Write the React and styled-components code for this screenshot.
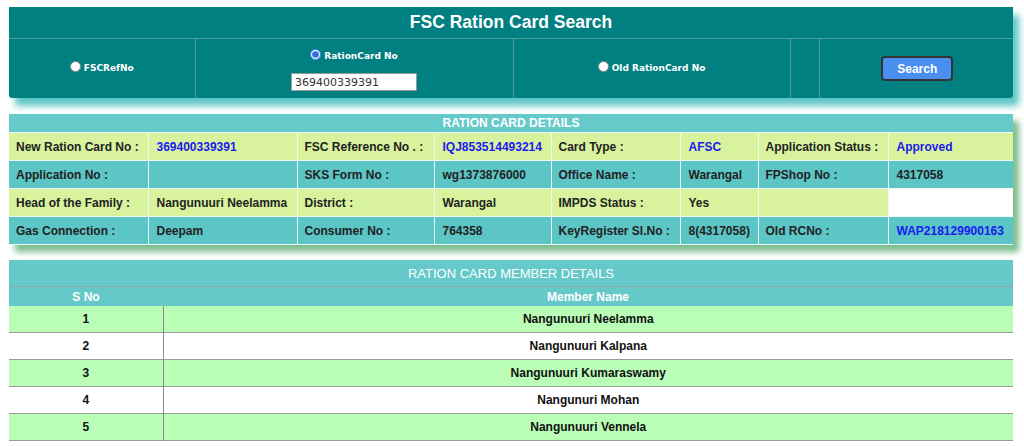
import React from 'react';
import styled, { createGlobalStyle } from 'styled-components';

const GlobalStyle = createGlobalStyle`
  body {
    margin: 0;
    background: #fff;
    font-family: "Liberation Sans", Arial, sans-serif;
  }
`;

const details = [
  {
    tone: 'green',
    cells: [
      ['New Ration Card No :', '369400339391', true],
      ['FSC Reference No . :', 'IQJ853514493214', true],
      ['Card Type :', 'AFSC', true],
      ['Application Status :', 'Approved', true],
    ],
  },
  {
    tone: 'teal',
    cells: [
      ['Application No :', '', false],
      ['SKS Form No :', 'wg1373876000', false],
      ['Office Name :', 'Warangal', false],
      ['FPShop No :', '4317058', false],
    ],
  },
  {
    tone: 'green',
    cells: [
      ['Head of the Family :', 'Nangunuuri Neelamma', false],
      ['District :', 'Warangal', false],
      ['IMPDS Status :', 'Yes', false],
      ['', null, false],
    ],
  },
  {
    tone: 'teal',
    cells: [
      ['Gas Connection :', 'Deepam', false],
      ['Consumer No :', '764358', false],
      ['KeyRegister Sl.No :', '8(4317058)', false],
      ['Old RCNo :', 'WAP218129900163', true],
    ],
  },
];

const members = [
  'Nangunuuri Neelamma',
  'Nangunuuri Kalpana',
  'Nangunuuri Kumaraswamy',
  'Nangunuri Mohan',
  'Nangunuuri Vennela',
];

const App = () => {
  return (
    <>
      <GlobalStyle />
      <Page>
        <SearchPanel>
          <colgroup>
            <col style={{ width: 186 }} />
            <col style={{ width: 318 }} />
            <col style={{ width: 277 }} />
            <col style={{ width: 29 }} />
            <col style={{ width: 194 }} />
          </colgroup>
          <tbody>
            <tr>
              <Title colSpan={5}>FSC Ration Card Search</Title>
            </tr>
            <tr>
              <SearchCell>
                <RadioLabel raised>
                  <Radio type="radio" name="mode" />
                  FSCRefNo
                </RadioLabel>
              </SearchCell>
              <SearchCell>
                <RadioLabel>
                  <Radio type="radio" name="mode" defaultChecked />
                  RationCard No
                </RadioLabel>
                <CardInput defaultValue="369400339391" />
              </SearchCell>
              <SearchCell>
                <RadioLabel raised>
                  <Radio type="radio" name="mode" />
                  Old RationCard No
                </RadioLabel>
              </SearchCell>
              <SearchCell />
              <SearchCell>
                <SearchButton>Search</SearchButton>
              </SearchCell>
            </tr>
          </tbody>
        </SearchPanel>

        <DetailsPanel>
          <colgroup>
            {[139, 149, 137, 117, 129, 78, 130, 125].map((w, i) => (
              <col key={i} style={{ width: w }} />
            ))}
          </colgroup>
          <tbody>
            <tr>
              <DetailsHead colSpan={8}>RATION CARD DETAILS</DetailsHead>
            </tr>
            {details.map((row, r) => (
              <tr key={r}>
                {row.cells.map(([label, value, blue], c) => (
                  <React.Fragment key={c}>
                    <DetailCell tone={row.tone} label>
                      {label}
                    </DetailCell>
                    <DetailCell tone={value === null ? 'white' : row.tone} blue={blue}>
                      {value}
                    </DetailCell>
                  </React.Fragment>
                ))}
              </tr>
            ))}
          </tbody>
        </DetailsPanel>

        <MemberPanel>
          <colgroup>
            <col style={{ width: 154 }} />
            <col />
          </colgroup>
          <tbody>
            <tr>
              <MemberHead colSpan={2}>RATION CARD MEMBER DETAILS</MemberHead>
            </tr>
            <tr>
              <ColHead>S No</ColHead>
              <ColHead>Member Name</ColHead>
            </tr>
            {members.map((name, i) => (
              <MemberRow key={i} odd={i % 2 === 0}>
                <MemberCell divider>{i + 1}</MemberCell>
                <MemberCell>{name}</MemberCell>
              </MemberRow>
            ))}
          </tbody>
        </MemberPanel>
      </Page>
    </>
  );
};

export default App;

const Page = styled.div`
  display: flex;
  flex-direction: column;
  padding: 7px 11px 0 9px;
  height: 446px;
  box-sizing: border-box;
  overflow: hidden;
`;

const SearchPanel = styled.table`
  width: 1004px;
  table-layout: fixed;
  border-collapse: collapse;
  background: #008080;
  box-shadow: 6px 8px 7px #5ec6c6;
  border-radius: 0 0 3px 3px;
`;

const Title = styled.td`
  height: 31px;
  padding: 0;
  text-align: center;
  color: #fff;
  font-size: 17.5px;
  font-weight: bold;
  border-bottom: 1px solid #4f9e9e;
`;

const SearchCell = styled.td`
  height: 59px;
  padding: 0;
  text-align: center;
  vertical-align: middle;
  border-left: 1px solid #4f9e9e;
  &:first-child {
    border-left: none;
  }
`;

const RadioLabel = styled.label`
  display: inline-flex;
  align-items: center;
  gap: 3px;
  margin-bottom: ${(p) => (p.raised ? 4 : 0)}px;
  color: #fff;
  font-family: "DejaVu Sans", Verdana, sans-serif;
  font-size: 9px;
  font-weight: bold;
`;

const Radio = styled.input`
  width: 11px;
  height: 11px;
  margin: 0 0 3px;
  accent-color: #2f6fe0;
`;

const CardInput = styled.input`
  display: block;
  margin: 9px auto 0;
  width: 126px;
  height: 18px;
  box-sizing: border-box;
  border: 1px solid #999;
  padding: 0 3px;
  font-family: "DejaVu Sans", Verdana, sans-serif;
  font-size: 11px;
  color: #333;
  background: #fff;
`;

const SearchButton = styled.button`
  width: 72px;
  height: 25px;
  background: #4a8ef0;
  border: 2px solid #333;
  border-radius: 4px;
  color: #fff;
  font-family: "Liberation Sans", Arial, sans-serif;
  font-size: 12px;
  font-weight: bold;
  margin-left: 2px;
`;

const DetailsPanel = styled.table`
  margin-top: 16px;
  width: 1004px;
  table-layout: fixed;
  border-collapse: collapse;
  box-shadow: 6px 7px 6px #7dbe8e;
`;

const DetailsHead = styled.td`
  height: 18px;
  padding: 0;
  background: #66caca;
  color: #fff;
  font-size: 12px;
  font-weight: bold;
  text-align: center;
`;

const toneColors = {
  green: '#d8f29d',
  teal: '#5cc5c5',
  white: '#ffffff',
};

const DetailCell = styled.td`
  height: 27px;
  padding: 0 0 0 ${(p) => (p.label ? 7 : 8)}px;
  background: ${(p) => toneColors[p.tone]};
  border: 1px solid #eef8f4;
  border-top: 1px solid #f4fbf6;
  color: ${(p) => (p.blue ? '#1a1aee' : '#222')};
  font-size: 12px;
  font-weight: bold;
  white-space: nowrap;
  overflow: hidden;
  &:first-child {
    border-left: none;
  }
  &:last-child {
    border-right: none;
  }
`;

const MemberPanel = styled.table`
  margin-top: 15px;
  width: 1004px;
  table-layout: fixed;
  border-collapse: collapse;
`;

const MemberHead = styled.td`
  height: 26px;
  padding: 0;
  background: #65c9c9;
  color: #fff;
  font-size: 13px;
  text-align: center;
  border-bottom: 1px solid #8aa9a9;
`;

const ColHead = styled.td`
  height: 19px;
  padding: 0;
  background: #65c9c9;
  color: #fff;
  font-size: 12px;
  font-weight: bold;
  text-align: center;
`;

const MemberRow = styled.tr`
  background: ${(p) => (p.odd ? '#b9fdb7' : '#ffffff')};
  border-bottom: 1px solid #9a9a9a;
`;

const MemberCell = styled.td`
  height: 26px;
  padding: 0;
  text-align: center;
  color: #111;
  font-size: 12px;
  font-weight: bold;
  border-right: ${(p) => (p.divider ? '1px solid #8c8c8c' : 'none')};
`;
